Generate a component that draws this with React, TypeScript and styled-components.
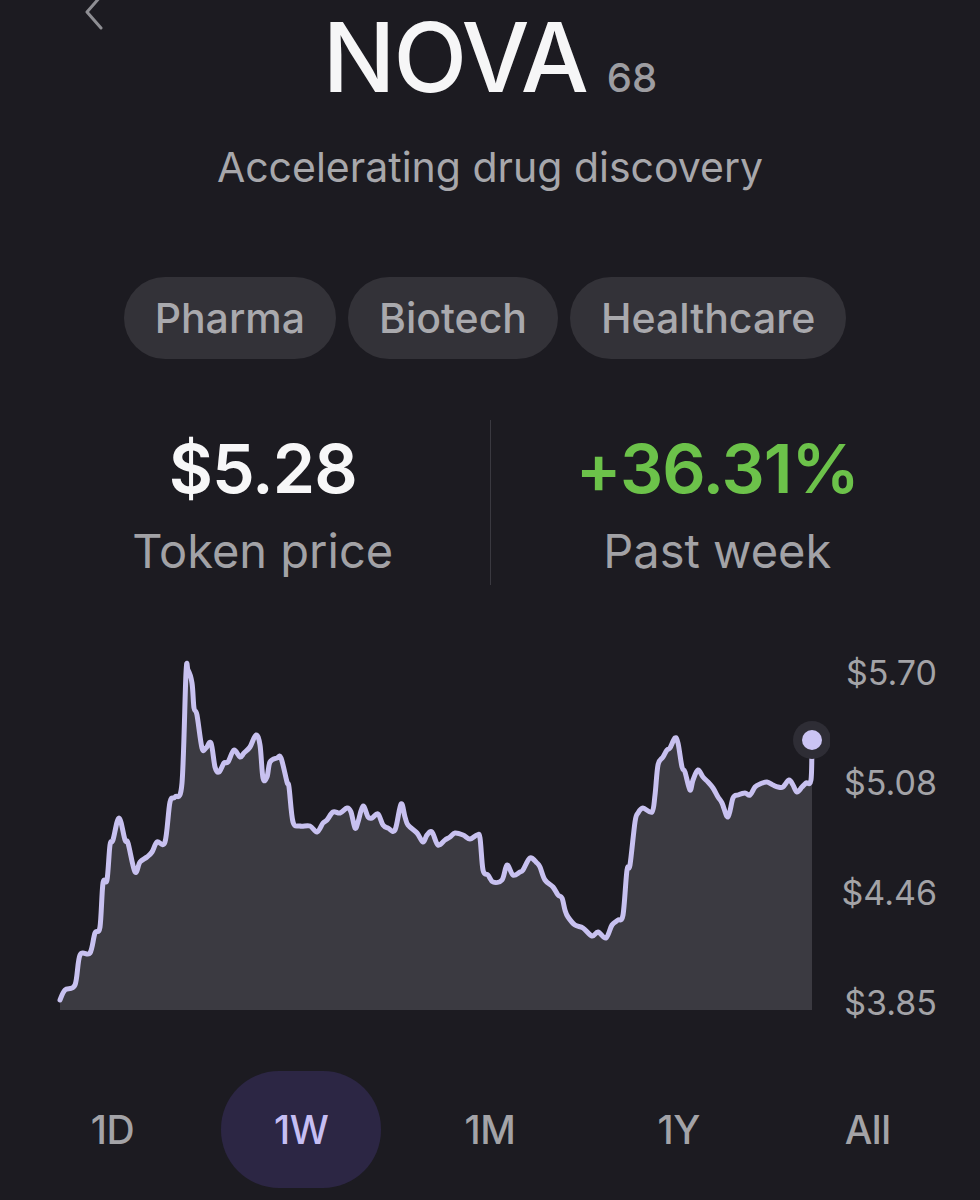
import React from 'react';
import styled, { createGlobalStyle } from 'styled-components';

const GlobalStyle = createGlobalStyle`
  html, body {
    margin: 0;
    padding: 0;
    background: #1c1b21;
  }
  body {
    font-family: Inter, "Noto Sans", "Liberation Sans", sans-serif;
    -webkit-font-smoothing: antialiased;
  }
`;

const Page = styled.div`
  width: 980px;
  height: 1200px;
  overflow: hidden;
  background: #1c1b21;
  color: #f4f4f5;
`;

const Header = styled.div`
  display: grid;
  grid-template-columns: 1fr auto 1fr;
  align-items: start;
`;

const BackButton = styled.svg`
  margin: -8px 0 0 80px;
  display: block;
`;

const TitleRow = styled.div`
  display: flex;
  align-items: baseline;
  gap: 20px;
  margin-top: 9px;
`;

const Title = styled.h1`
  margin: 0;
  font-size: 96px;
  line-height: 96px;
  font-weight: 500;
  letter-spacing: -2px;
  color: #f6f6f7;
`;

const Rank = styled.span`
  font-size: 40px;
  font-weight: 500;
  color: #9d9da1;
`;

const Subtitle = styled.p`
  margin: 38px 0 0;
  text-align: center;
  font-size: 41px;
  line-height: 48px;
  color: #a7a7ab;
`;

const TagRow = styled.div`
  display: flex;
  justify-content: center;
  gap: 12px;
  margin-top: 86px;
  padding-right: 10px;
`;

const Tag = styled.span`
  height: 82px;
  padding: 0 31px;
  border-radius: 41px;
  background: #333238;
  color: #a9a9ad;
  font-size: 41px;
  font-weight: 500;
  display: flex;
  align-items: center;
`;

const Stats = styled.div`
  display: grid;
  grid-template-columns: 1fr 1px 1fr;
  height: 165px;
  margin-top: 61px;
  padding: 0 36px;
`;

const Stat = styled.div`
  display: flex;
  flex-direction: column;
  align-items: center;
  padding-top: 14px;
`;

const StatValue = styled.div<{ $positive?: boolean }>`
  font-size: 68px;
  line-height: 68px;
  font-weight: 600;
  letter-spacing: -1px;
  color: ${(p) => (p.$positive ? '#6cc24a' : '#f7f7f8')};
`;

const StatLabel = styled.div`
  margin-top: 21px;
  font-size: 47px;
  line-height: 55px;
  color: #a2a2a6;
`;

const Divider = styled.div`
  background: #3a3940;
`;

const ChartArea = styled.div`
  display: flex;
  height: 390px;
  margin-top: 55px;
  padding-left: 40px;
`;

const AxisLabels = styled.div`
  flex: 1;
  display: flex;
  flex-direction: column;
  justify-content: space-between;
  align-items: flex-end;
  padding: 13px 43px 7px 0;
`;

const AxisLabel = styled.span`
  font-size: 34px;
  line-height: 40px;
  color: #a3a3a7;
`;

const Tabs = styled.div`
  display: grid;
  grid-template-columns: repeat(5, 1fr);
  padding: 0 18px;
  margin-top: 41px;
`;

const Tab = styled.button<{ $active?: boolean }>`
  justify-self: center;
  width: 160px;
  height: 117px;
  border: 0;
  border-radius: 58px;
  padding: 0;
  font-family: inherit;
  font-size: 39px;
  font-weight: 500;
  letter-spacing: -0.5px;
  background: ${(p) => (p.$active ? '#2c2644' : 'transparent')};
  color: ${(p) => (p.$active ? '#c6bef3' : '#a3a3a7')};
`;

// price series, in the chart's own pixel coordinates
const points: [number, number][] = [
  [60, 1000], [65, 990], [75, 985], [80, 955], [90, 953], [95, 933], [100, 927], [103, 883],
  [107, 880], [110, 845], [113, 840], [119, 818], [125, 840], [128, 843], [135, 872], [140, 862],
  [147, 857], [152, 852], [157, 842], [165, 842], [170, 802], [175, 797], [182, 783], [186, 673],
  [188, 670], [192, 683], [194, 708], [197, 715], [202, 748], [206, 748], [211, 743], [215, 767],
  [219, 772], [224, 763], [228, 762], [234, 750], [240, 757], [244, 753], [250, 747], [256, 735],
  [260, 745], [263, 778], [267, 777], [270, 762], [277, 758], [281, 758], [287, 782], [289, 787],
  [293, 822], [300, 826], [310, 826], [317, 832], [323, 823], [327, 820], [333, 812], [340, 813],
  [347, 808], [351, 812], [355, 828], [358, 822], [363, 806], [368, 817], [372, 818], [378, 814],
  [383, 825], [388, 828], [395, 830], [401, 804], [405, 817], [408, 825], [417, 833], [423, 842],
  [427, 835], [432, 832], [438, 845], [445, 840], [450, 837], [455, 833], [463, 835], [470, 839],
  [477, 835], [480, 838], [483, 870], [488, 875], [493, 882], [502, 880], [507, 865], [513, 875],
  [520, 872], [523, 870], [530, 858], [537, 863], [540, 867], [545, 880], [553, 887], [558, 895],
  [562, 898], [565, 910], [568, 917], [575, 925], [583, 928], [592, 936], [598, 932], [606, 938],
  [612, 925], [618, 920], [623, 915], [627, 870], [630, 865], [635, 822], [638, 813], [643, 808],
  [652, 812], [655, 795], [658, 765], [663, 757], [667, 750], [670, 748], [675, 738], [678, 743],
  [682, 767], [685, 772], [690, 790], [693, 780], [698, 770], [703, 777], [708, 782], [713, 788],
  [718, 797], [722, 803], [728, 817], [733, 798], [738, 795], [745, 793], [750, 795], [755, 787],
  [760, 784], [767, 782], [773, 785], [778, 787], [783, 787], [789, 780], [793, 785], [797, 792],
  [802, 787], [806, 783], [811, 780], [812, 742],
];

const smoothPath = (pts: [number, number][]) => {
  let d = `M${pts[0][0]} ${pts[0][1]}`;
  for (let i = 0; i < pts.length - 1; i++) {
    const p0 = pts[i - 1] || pts[i];
    const p1 = pts[i];
    const p2 = pts[i + 1];
    const p3 = pts[i + 2] || p2;
    const c1x = p1[0] + (p2[0] - p0[0]) / 6;
    const c1y = p1[1] + (p2[1] - p0[1]) / 6;
    const c2x = p2[0] - (p3[0] - p1[0]) / 6;
    const c2y = p2[1] - (p3[1] - p1[1]) / 6;
    d += ` C${c1x.toFixed(1)} ${c1y.toFixed(1)} ${c2x.toFixed(1)} ${c2y.toFixed(1)} ${p2[0]} ${p2[1]}`;
  }
  return d;
};

const PriceChart = () => {
  const line = smoothPath(points);
  const last = points[points.length - 1];
  const area = `${line} L${last[0]} 1010 L${points[0][0]} 1010 Z`;
  return (
    <svg width="790" height="390" viewBox="40 640 790 390">
      <path d={area} fill="#3b3a41" />
      <path d={line} fill="none" stroke="#c8c1f0" strokeWidth="5" strokeLinejoin="round" strokeLinecap="round" />
      <circle cx={last[0]} cy={last[1] - 2} r="19" fill="#2e2d35" />
      <circle cx={last[0]} cy={last[1] - 2} r="10" fill="#cbc4f3" />
    </svg>
  );
};

const tags = ['Pharma', 'Biotech', 'Healthcare'];
const ranges = ['1D', '1W', '1M', '1Y', 'All'];
const axis = ['$5.70', '$5.08', '$4.46', '$3.85'];

export default function App() {
  return (
    <Page>
      <GlobalStyle />
      <Header>
        <BackButton width="26" height="40" viewBox="0 0 26 40">
          <path d="M21 4 L7 20 L21 36" fill="none" stroke="#8e8e93" strokeWidth="3" strokeLinecap="round" strokeLinejoin="round" />
        </BackButton>
        <TitleRow>
          <Title>NOVA</Title>
          <Rank>68</Rank>
        </TitleRow>
        <div />
      </Header>
      <Subtitle>Accelerating drug discovery</Subtitle>
      <TagRow>
        {tags.map((t) => (
          <Tag key={t}>{t}</Tag>
        ))}
      </TagRow>
      <Stats>
        <Stat>
          <StatValue>$5.28</StatValue>
          <StatLabel>Token price</StatLabel>
        </Stat>
        <Divider />
        <Stat>
          <StatValue $positive>+36.31%</StatValue>
          <StatLabel>Past week</StatLabel>
        </Stat>
      </Stats>
      <ChartArea>
        <PriceChart />
        <AxisLabels>
          {axis.map((a) => (
            <AxisLabel key={a}>{a}</AxisLabel>
          ))}
        </AxisLabels>
      </ChartArea>
      <Tabs>
        {ranges.map((r) => (
          <Tab key={r} $active={r === '1W'}>
            {r}
          </Tab>
        ))}
      </Tabs>
    </Page>
  );
}
